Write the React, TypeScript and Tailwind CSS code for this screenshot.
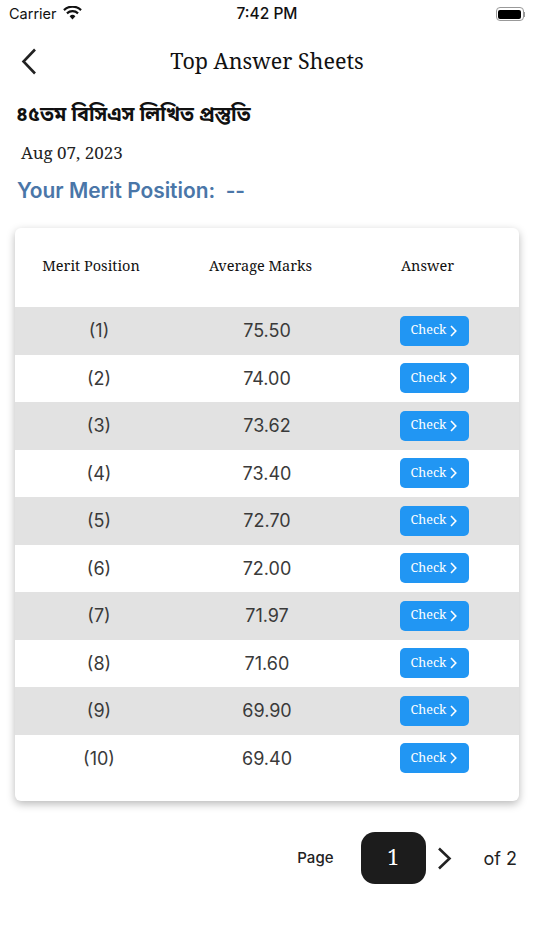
import React from 'react';

const rows = [
  { pos: 1, marks: '75.50' },
  { pos: 2, marks: '74.00' },
  { pos: 3, marks: '73.62' },
  { pos: 4, marks: '73.40' },
  { pos: 5, marks: '72.70' },
  { pos: 6, marks: '72.00' },
  { pos: 7, marks: '71.97' },
  { pos: 8, marks: '71.60' },
  { pos: 9, marks: '69.90' },
  { pos: 10, marks: '69.40' },
];

const serif = "font-['Noto_Serif','DejaVu_Serif','Liberation_Serif',serif]";

const StatusBar = () => (
  <div className="h-[28px] grid grid-cols-[1fr_auto_1fr] items-center px-[9px] font-['Inter',sans-serif] text-[#111]">
    <div className="flex items-center gap-[6px] text-[14.5px]">
      <span>Carrier</span>
      <svg width="19" height="14" viewBox="0 0 19 14" className="-mt-[3px]">
        <path d="M9.5 13.5 6.6 10.2a4.2 4.2 0 0 1 5.8 0Z" fill="#111" />
        <path d="M4.7 8.2a7 7 0 0 1 9.6 0l1.5-1.7a9.4 9.4 0 0 0-12.6 0Z" fill="#111" />
        <path d="M1.7 4.9a11.3 11.3 0 0 1 15.6 0l1.5-1.7a13.6 13.6 0 0 0-18.6 0Z" fill="#111" />
      </svg>
    </div>
    <span className="text-[15.5px] font-medium">7:42 PM</span>
    <div className="flex items-center justify-end">
      <div className="w-[28px] h-[14px] rounded-[4px] border border-[#999] p-[1.5px]">
        <div className="w-full h-full rounded-[2px] bg-black" />
      </div>
      <div className="w-[1px] h-[5px] bg-[#999] ml-[0.5px]" />
    </div>
  </div>
);

export default function App() {
  return (
    <div className="w-[534px] h-[950px] bg-white overflow-hidden">
      <StatusBar />

      <div className="relative h-[68px] flex items-center justify-center">
        <svg width="16" height="27" viewBox="0 0 16 27" className="absolute left-[21px] top-[20px]">
          <path d="M14 1.5 2.5 13.5 14 25.5" fill="none" stroke="#222" strokeWidth="2.6" />
        </svg>
        <h1 className={`${serif} text-[21.5px] text-[#111] -mt-[1px]`}>Top Answer Sheets</h1>
      </div>

      <p className="pl-[16px] h-[36px] mt-[3px] flex items-center font-['Noto_Sans_Bengali','Noto_Sans',sans-serif] font-bold text-[19.8px] text-[#111]">
        ৪৫তম বিসিএস লিখিত প্রস্তুতি
      </p>

      <p className={`${serif} pl-[21px] mt-[4px] h-[28px] flex items-center text-[17px] text-[#222]`}>Aug 07, 2023</p>

      <p className="pl-[17px] mt-[10px] h-[28px] flex items-center font-['Inter',sans-serif] font-semibold text-[20.9px] text-[#4a76a8] whitespace-pre">
        Your Merit Position:  --
      </p>

      <div className="mx-[15px] mt-[23px] w-[504px] rounded-[6px] bg-white pb-[19px] shadow-[0_3px_8px_rgba(0,0,0,0.28)] overflow-hidden">
        <div className={`${serif} h-[79px] pb-[4px] grid grid-cols-3 items-center text-center text-[14.5px] text-[#111]`}>
          <span className="pr-[16px]">Merit Position</span>
          <span className="pr-[13px]">Average Marks</span>
          <span className="pr-[15px]">Answer</span>
        </div>

        {rows.map(row => (
          <div
            key={row.pos}
            className={`h-[47.5px] grid grid-cols-3 items-center text-center font-['Inter',sans-serif] text-[18px] text-[#3a3a3a] ${row.pos % 2 === 1 ? 'bg-[#e2e2e2]' : 'bg-white'}`}
          >
            <span>({row.pos})</span>
            <span>{row.marks}</span>
            <div className="flex justify-center pr-[2px]">
              <button className={`${serif} w-[69px] h-[30px] rounded-[5px] bg-[#2196f3] text-white text-[12.5px] flex items-center justify-center gap-[4px]`}>
                Check
                <svg width="7" height="12" viewBox="0 0 7 12">
                  <path d="M1 1 5.8 6 1 11" fill="none" stroke="white" strokeWidth="1.6" />
                </svg>
              </button>
            </div>
          </div>
        ))}
      </div>

      <div className="mt-[31px] flex items-center justify-end pr-[17px] font-['Inter',sans-serif] text-[#222]">
        <span className="text-[15px] font-medium">Page</span>
        <div className={`${serif} ml-[27px] w-[65px] h-[52px] rounded-[14px] bg-[#1c1c1c] text-white text-[21px] flex items-center justify-center`}>1</div>
        <svg width="15" height="23" viewBox="0 0 15 23" className="ml-[11px]">
          <path d="M2 1.5 12.5 11.5 2 21.5" fill="none" stroke="#222" strokeWidth="2.6" />
        </svg>
        <span className="ml-[32px] text-[18px]">of 2</span>
      </div>
    </div>
  );
}
